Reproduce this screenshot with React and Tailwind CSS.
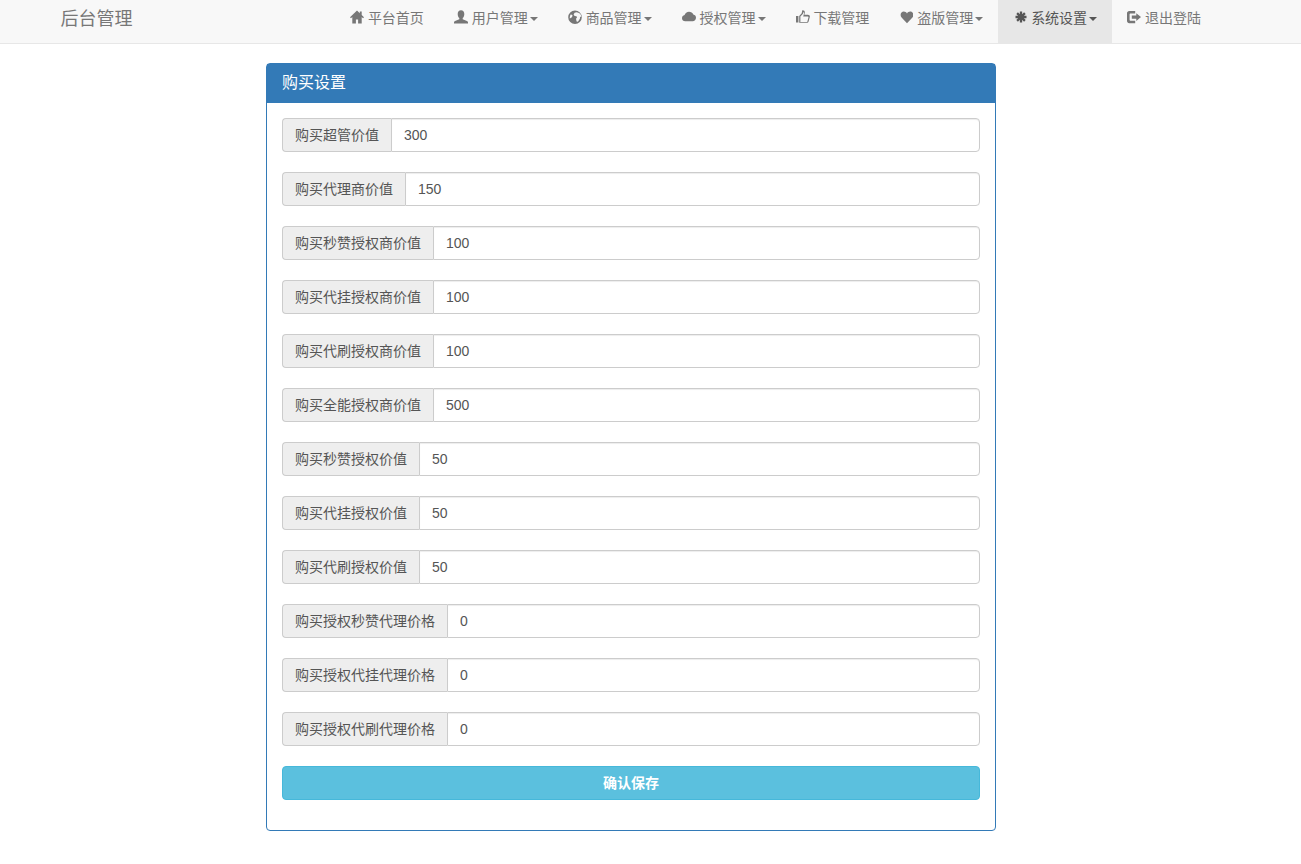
import React from 'react';

const fontStack = "font-['Liberation_Sans','Noto_Sans_CJK_SC',sans-serif]";

// glyphicon look-alikes, all on a 14 box
const icons = {
  home: <path d="M7 .4 0 7.200l1 1.100 1.300-1.200V13.600h3.600V9.400h2.200v4.200h3.600V7.100L13 8.300l1-1.100-2.300-2.200V1.400H9.800v1.800L7 .4Z" />,
  user: <path d="M7 .2c2.100 0 3.300 1.600 3.300 3.700 0 1.700-.7 3.300-1.600 4.200v1.200l4.200 1.700c.8.300 1.100.9 1.100 1.600v1H0v-1c0-.7.3-1.300 1.100-1.600l4.200-1.700V8.100C4.400 7.200 3.700 5.600 3.700 3.900 3.700 1.800 4.900.2 7 .2Z" />,
  globe: <path fillRule="evenodd" d="M7 .4a6.800 6.800 0 1 1 0 13.600A6.800 6.800 0 0 1 7 .4Zm1.500 1.800-1.900.5-1 1.700 1 1.600 1.900.3.500 1.200-1 1.300.6 2.700 1.300.3 2-3 .2-1.800 1.200-.4A5.200 5.200 0 0 0 8.500 2.200ZM2.900 4.200A5.200 5.200 0 0 0 1.900 8.400l2-1.100.7-1.700-1.700-1.400Z" />,
  cloud: <path d="M3.300 11.300C1.400 11.300 0 9.900 0 8.200c0-1.500 1.100-2.800 2.600-3.100C3.200 3.200 4.900 1.800 7 1.800c2 0 3.600 1.100 4.300 2.700C12.900 4.800 14 6.100 14 7.800c0 1.900-1.500 3.500-3.400 3.500H3.300Z" />,
  thumb: <path fillRule="evenodd" d="M0 6h2.400v6.500H0V6Zm3.200 0 2.500-2.700.6-3c1.600-.4 2.800.9 2.500 2.600l-.5 1.900h3.600c1.400 0 2.200 1.100 1.900 2.300l-1.200 4.400c-.2.800-.9 1.300-1.700 1.300H3.200V6Zm1.200.5v5.600h6.300c.3 0 .5-.2.600-.4l1.200-4.400c.1-.5-.2-.8-.7-.8H7.200l.9-3.200c.1-.6-.1-1.100-.6-1.300L7 3.800 4.400 6.500Z" />,
  heart: <path d="M8 13.200 2.800 7.800C2 7 1.600 6 1.600 5 1.600 3 3 1.600 4.800 1.600c1.300 0 2.500.7 3.200 1.900.7-1.200 1.900-1.900 3.200-1.900C13 1.600 14.400 3 14.400 5c0 1-.4 2-1.200 2.800L8 13.200Z" />,
  asterisk: <path stroke="currentColor" strokeWidth="2.300" d="M8 1.500v11M2.500 7h11M4.100 3.100l7.800 7.800M11.900 3.100l-7.800 7.800" />,
  logout: <path d="M2.200 1h6v2.500H3.300c-.4 0-.7.3-.7.700v5.800c0 .4.300.7.700.7h4.900v2.500h-6C1 13.200 0 12.200 0 11V3.200C0 2 1 1 2.200 1ZM9.300 3.200 14 7.100l-4.700 3.900V8.700H4.800V5.500h4.500V3.200Z" />,
};

const navItems = [
  { icon: 'home', label: '平台首页' },
  { icon: 'user', label: '用户管理', caret: true },
  { icon: 'globe', label: '商品管理', caret: true },
  { icon: 'cloud', label: '授权管理', caret: true },
  { icon: 'thumb', label: '下载管理' },
  { icon: 'heart', label: '盗版管理', caret: true },
  { icon: 'asterisk', label: '系统设置', caret: true, active: true },
  { icon: 'logout', label: '退出登陆' },
];

const fields = [
  ['购买超管价值', '300'],
  ['购买代理商价值', '150'],
  ['购买秒赞授权商价值', '100'],
  ['购买代挂授权商价值', '100'],
  ['购买代刷授权商价值', '100'],
  ['购买全能授权商价值', '500'],
  ['购买秒赞授权价值', '50'],
  ['购买代挂授权价值', '50'],
  ['购买代刷授权价值', '50'],
  ['购买授权秒赞代理价格', '0'],
  ['购买授权代挂代理价格', '0'],
  ['购买授权代刷代理价格', '0'],
];

function NavItem({ icon, label, caret, active }) {
  return (
    <li className={`flex h-[43px] items-start px-[15px] pt-2 text-sm leading-5 ${active ? 'bg-[#e7e7e7] text-[#555]' : 'text-[#777]'}`}>
      <svg viewBox="0 0 14 14" className="mt-[2px] mr-[3.89px] h-[14px] w-[14px] fill-current">{icons[icon]}</svg>
      <span>{label}</span>
      {caret && <span className="mt-[9px] ml-[2px] h-0 w-0 border-x-4 border-t-4 border-x-transparent border-t-current" />}
    </li>
  );
}

function Field({ label, value }) {
  return (
    <div className="mb-5 flex h-[34px]">
      <span className="flex items-center whitespace-nowrap rounded-l border border-r-0 border-[#ccc] bg-[#eee] px-3 text-sm text-[#555]">{label}</span>
      <input
        defaultValue={value}
        className="min-w-0 flex-1 rounded-r border border-[#ccc] bg-white px-3 text-sm text-[#555] shadow-[inset_0_1px_1px_rgba(0,0,0,0.075)] outline-none"
      />
    </div>
  );
}

export default function App() {
  return (
    <div className={`min-h-[864px] bg-white ${fontStack}`}>
      <nav className="flex h-11 border-b border-[#e7e7e7] bg-[#f8f8f8] pr-[85px] pl-[60.5px]">
        <a className="pt-2 text-lg leading-[22px] text-[#777]">后台管理</a>
        <ul className="ml-auto flex">
          {navItems.map((item) => <NavItem key={item.label} {...item} />)}
        </ul>
      </nav>

      <div className="mt-[19px] ml-[266px] w-[730px] rounded border border-[#337ab7] bg-white">
        <div className="h-[39px] bg-[#337ab7] px-[15px] py-[10px] text-base leading-[18px] text-white">购买设置</div>
        <div className="p-[15px]">
          {fields.map(([label, value]) => <Field key={label} label={label} value={value} />)}
          <button className="mb-[15px] block h-[34px] w-full rounded border border-[#46b8da] bg-[#5bc0de] text-sm font-bold text-white">确认保存</button>
        </div>
      </div>
    </div>
  );
}
